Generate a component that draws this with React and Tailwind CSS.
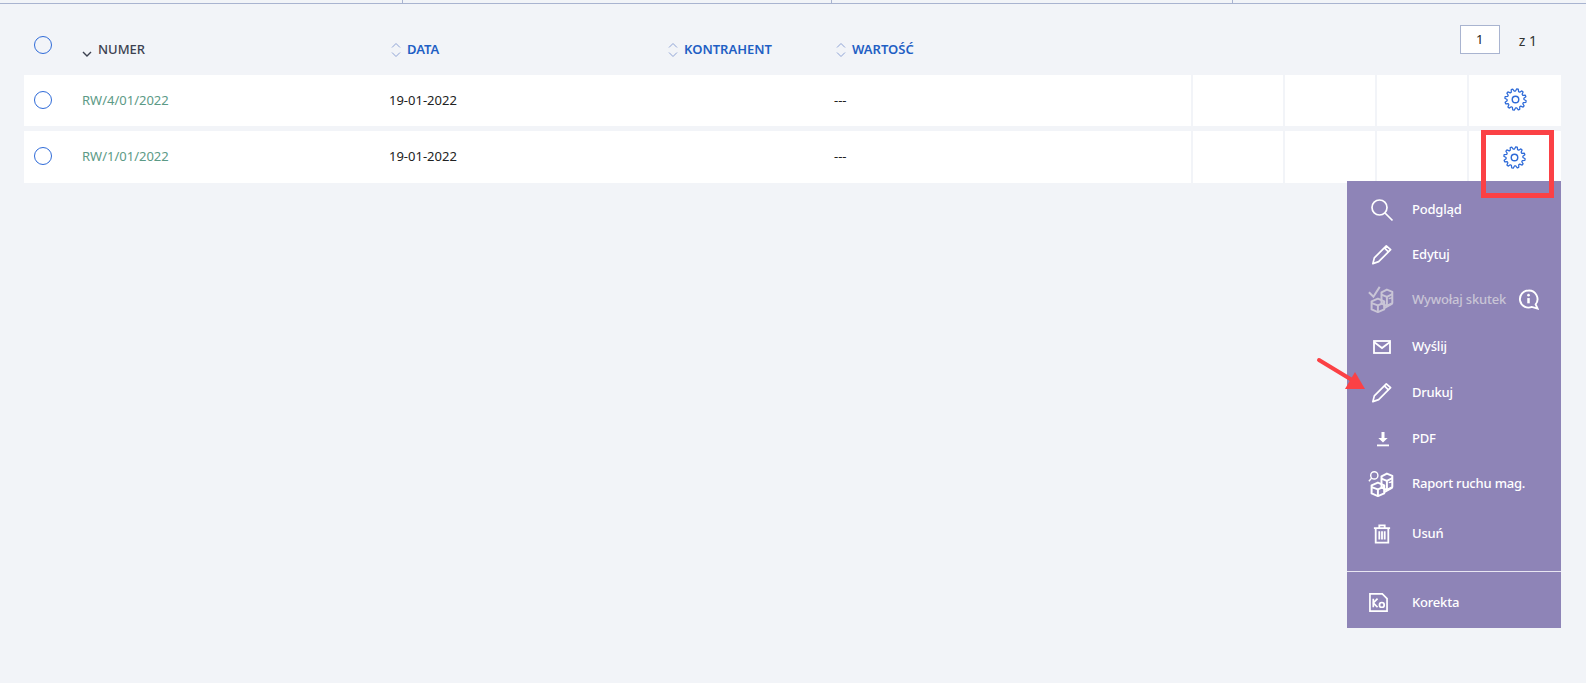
import React from 'react';

const FONT = "font-['Noto_Sans',sans-serif]";

// cog with square-ish teeth
const gearPath = () => {
  const teeth = 12;
  const step = (Math.PI * 2) / teeth;
  const p = (r, t) => `${(12 + r * Math.cos(t)).toFixed(2)} ${(12 + r * Math.sin(t)).toFixed(2)}`;
  const pts = [];
  for (let i = 0; i < teeth; i++) {
    const a = i * step;
    pts.push(`${i === 0 ? 'M' : 'L'}${p(8.8, a)}`);
    pts.push(`L${p(11.2, a + step * 0.22)}`);
    pts.push(`L${p(11.2, a + step * 0.5)}`);
    pts.push(`L${p(8.8, a + step * 0.72)}`);
  }
  return pts.join(' ') + 'Z';
};

const Gear = () => (
  <svg viewBox="0 0 24 24" className="w-[23px] h-[23px]" fill="none" stroke="#2f6bd8" strokeWidth="1.3" strokeLinejoin="round">
    <path d={gearPath()} />
    <circle cx="12" cy="12" r="3.4" strokeWidth="1.5" />
  </svg>
);

const Circle = () => <div className="w-[18px] h-[18px] rounded-full border-[1.5px] border-[#2f6bd8]" />;

const SortIcon = () => (
  <svg viewBox="0 0 10 16" className="w-[10px] h-[16px] mr-[6px]" fill="none" stroke="#8ea3d6" strokeWidth="1">
    <path d="M1 5.5 5 1.5 9 5.5" />
    <path d="M1 10.5 5 14.5 9 10.5" />
  </svg>
);

const SortHead = ({ label, className }) => (
  <div className={`flex items-center ${className}`}>
    <SortIcon />
    <span className="text-[13px] font-semibold text-[#1f5fc4]">{label}</span>
  </div>
);

const Row = ({ number, className, gearClass }) => (
  <div className={`flex bg-white text-[13px] ${className}`}>
    <div className="w-[58px] flex items-center pl-[10px] pb-[2px]"><Circle /></div>
    <div className="w-[307px] flex items-center text-[#5c9a86]">{number}</div>
    <div className="w-[445px] flex items-center text-[#222]">19-01-2022</div>
    <div className="w-[359px] flex items-center text-[#222] border-r-2 border-[#f2f4f8]">---</div>
    <div className="w-[92px] border-r-2 border-[#f2f4f8]" />
    <div className="w-[92px] border-r-2 border-[#f2f4f8]" />
    <div className="w-[92px] border-r-2 border-[#f2f4f8]" />
    <div className={`flex-1 flex items-center justify-center ${gearClass}`}><Gear /></div>
  </div>
);

const Boxes = ({ color }) => (
  <g fill="none" stroke={color} strokeWidth="2.2" strokeLinejoin="round">
    <path d="M15 7 21 4 27 6.5V19L21 22 15 19.5Z" />
    <path d="M15 9.5 21 12 27 9" />
    <path d="M21 12V22" />
    <path d="M4 17 11 14 18 17V26L11 29 4 26Z" />
    <path d="M4 19 11 21.5 18 18.5" />
    <path d="M11 21.5V29" />
    <path d="M18 24.5 27 19.5" />
    <path d="M23 14 27 13" strokeWidth="1.6" />
  </g>
);

const Search = () => (
  <svg viewBox="0 0 24 24" className="w-[24px] h-[24px]" fill="none" stroke="#fff" strokeWidth="1.7">
    <circle cx="9.5" cy="9.5" r="7.5" /><path d="M15 15 22.5 22.5" />
  </svg>
);
const Pencil = () => (
  <svg viewBox="0 0 24 24" className="w-[23px] h-[23px]" fill="none" stroke="#fff" strokeWidth="1.8" strokeLinejoin="round">
    <path d="M3 21.5 4.5 15.5 17 3 21.5 7 9 19.5Z" /><path d="M15 5 19.5 9.5" />
  </svg>
);
const Effect = () => (
  <svg viewBox="0 0 30 30" className="w-[27px] h-[27px]">
    <path d="M1 7 6 12 13 1" fill="none" stroke="#c9c5d6" strokeWidth="2.2" />
    <Boxes color="#c9c5d6" />
  </svg>
);
const Mail = () => (
  <svg viewBox="0 0 18 14" className="w-[18px] h-[14px]" fill="none" stroke="#fff" strokeWidth="1.8">
    <rect x="1" y="1" width="16" height="12" /><path d="M1 2 9 8 17 2" />
  </svg>
);
const Download = () => (
  <svg viewBox="0 0 16 16" className="w-[16px] h-[16px] ml-[2px]" fill="#fff">
    <path d="M6.5 1h3v6h3.2L8 11.6 3.3 7h3.2z" /><rect x="2" y="13.5" width="12" height="1.8" />
  </svg>
);
const Report = () => (
  <svg viewBox="0 0 30 30" className="w-[27px] h-[27px]">
    <circle cx="7" cy="6" r="4" fill="none" stroke="#fff" strokeWidth="1.6" />
    <path d="M4 9 1 12.5" stroke="#fff" strokeWidth="1.6" />
    <Boxes color="#fff" />
  </svg>
);
const Trash = () => (
  <svg viewBox="0 0 20 22" className="w-[18px] h-[20px]" fill="none" stroke="#fff" strokeWidth="2">
    <path d="M1 4.5H19" /><path d="M7 4.5V1.5H13V4.5" /><path d="M3 4.5V20.5H17V4.5" />
    <path d="M7 8V17M10 8V17M13 8V17" />
  </svg>
);
const Korekta = () => (
  <svg viewBox="0 0 20 20" className="w-[19px] h-[19px] mr-[7px]" fill="none" stroke="#fff" strokeWidth="1.8">
    <path d="M1 1H14L19 6V19H1Z" />
    <path d="M4.5 6V15M9 6 4.5 10.5 9 15" /><circle cx="13.5" cy="12.5" r="2.5" />
  </svg>
);
const InfoBubble = () => (
  <svg viewBox="0 0 22 22" className="w-[21px] h-[21px]" fill="none" stroke="#fff" strokeWidth="2">
    <path d="M11 1.5a9 9 0 1 0 3.5 17.3L20.5 20.5 18.5 16A9 9 0 0 0 11 1.5Z" />
    <circle cx="11" cy="6.5" r="1.4" fill="#fff" stroke="none" />
    <path d="M11 9.5V15" strokeWidth="2.6" />
  </svg>
);

const MenuItem = ({ icon, label, className, dim, extra }) => (
  <div className={`flex items-center h-[45px] ${className}`}>
    <div className="w-[65px] flex justify-center pl-[4px]">{icon}</div>
    <span className={`text-[13px] font-medium tracking-[-0.2px] ${dim ? 'text-[#c9c5d6]' : 'text-white'}`}>{label}</span>
    {extra}
  </div>
);

const App = () => {
  return (
    <div className={`relative w-[1586px] h-[683px] overflow-hidden bg-[#f2f4f8] ${FONT}`}>
      {/* górna linia z podziałkami */}
      <div className="flex h-[4px] border-b border-[#a9b4d0]">
        <div className="w-[403px] border-r border-[#a9b4d0]" />
        <div className="w-[429px] border-r border-[#a9b4d0]" />
        <div className="w-[401px] border-r border-[#a9b4d0]" />
      </div>

      {/* nagłówek tabeli */}
      <div className="flex h-[71px] ml-[24px] mr-[25px]">
        <div className="w-[58px] pl-[10px] pt-[32px]"><Circle /></div>
        <div className="w-[309px] flex items-center pt-[21px]">
          <svg viewBox="0 0 10 6" className="w-[10px] h-[6px] mr-[6px] mt-[8px]" fill="none" stroke="#3c4150" strokeWidth="1.4">
            <path d="M1 1 5 5 9 1" />
          </svg>
          <span className="text-[13px] font-medium text-[#3c4150]">NUMER</span>
        </div>
        <SortHead label="DATA" className="w-[277px] pt-[21px]" />
        <SortHead label="KONTRAHENT" className="w-[168px] pt-[21px]" />
        <SortHead label="WARTOŚĆ" className="w-[400px] pt-[21px]" />
        <div className="flex-1 flex items-start justify-end pt-[21px] pr-[24px]">
          <div className="w-[40px] h-[29px] mr-[1px] pt-[1px] bg-white border border-[#a9b4d0] flex items-center justify-center text-[13px] text-[#222]">1</div>
          <span className="ml-[18px] mt-[5px] text-[14px] text-[#333]">z 1</span>
        </div>
      </div>

      {/* wiersze */}
      <div className="ml-[24px] mr-[25px] flex flex-col gap-[5px]">
        <Row number="RW/4/01/2022" className="h-[51px]" gearClass="pb-[2px]" />
        <Row number="RW/1/01/2022" className="h-[52px]" gearClass="pr-[2px]" />
      </div>

      {/* menu akcji */}
      <div className="absolute left-[1347px] top-[181px] w-[214px] h-[447px] bg-[#8e84b7] flex flex-col pt-[6px]">
        <MenuItem icon={<Search />} label="Podgląd" />
        <MenuItem icon={<Pencil />} label="Edytuj" />
        <MenuItem icon={<Effect />} label="Wywołaj skutek" dim
          extra={<div className="ml-[12px]"><InfoBubble /></div>} />
        <MenuItem icon={<Mail />} label="Wyślij" className="mt-[2px]" />
        <MenuItem icon={<Pencil />} label="Drukuj" className="mt-[1px]" />
        <MenuItem icon={<Download />} label="PDF" className="mt-[1px]" />
        <MenuItem icon={<Report />} label="Raport ruchu mag." />
        <MenuItem icon={<Trash />} label="Usuń" className="mt-[5px]" />
        <div className="mt-[15px] border-t border-[#e8e6f2]" />
        <MenuItem icon={<Korekta />} label="Korekta" className="mt-[8px]" />
      </div>

      {/* adnotacje na zrzucie */}
      <div className="absolute left-[1481px] top-[130px] w-[73px] h-[68px] border-[5px] border-[#fb4145]" />
      <svg className="absolute left-[1310px] top-[350px] w-[60px] h-[50px]" viewBox="0 0 60 50">
        <path d="M9 10 42 30" stroke="#fb4145" strokeWidth="4" strokeLinecap="round" />
        <path d="M55 39 35 39 45 22Z" fill="#fb4145" />
      </svg>
    </div>
  );
};

export default App;
